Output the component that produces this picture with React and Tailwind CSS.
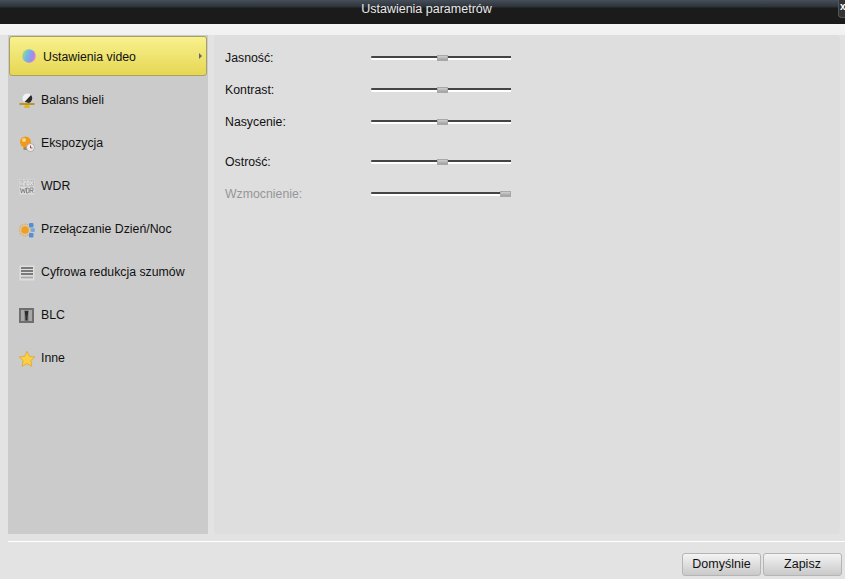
function IconBall() {
  return (
    <svg width="14" height="14" viewBox="0 0 14 14">
      <defs>
        <linearGradient id="ball" x1="0" y1="0.3" x2="1" y2="0.7">
          <stop offset="0" stopColor="#a8d880" />
          <stop offset="0.4" stopColor="#6fb6e8" />
          <stop offset="0.75" stopColor="#a78ae8" />
          <stop offset="1" stopColor="#e58ad8" />
        </linearGradient>
      </defs>
      <circle cx="7" cy="7" r="6.8" fill="url(#ball)" />
    </svg>
  )
}

function IconBalance() {
  return (
    <svg width="16" height="16" viewBox="0 0 16 16">
      <circle cx="8.5" cy="5.5" r="5" fill="#f2f2f2" />
      <path d="M12 2 A5 5 0 0 1 10 10 L5.5 9 Z" fill="#2a2a2a" />
      <rect x="0.5" y="10" width="15" height="2" fill="#b8962a" />
      <path d="M6 12 H10 L11 15 H5 Z" fill="#e3b320" />
    </svg>
  )
}

function IconExposure() {
  return (
    <svg width="16" height="16" viewBox="0 0 16 16">
      <circle cx="6.5" cy="6" r="5.5" fill="#f09a1a" />
      <circle cx="5" cy="4" r="2" fill="#fbd48a" />
      <rect x="4.5" y="11" width="4" height="3" fill="#a58a60" />
      <circle cx="11.5" cy="11.5" r="4" fill="#eeeeee" stroke="#9a9a9a" strokeWidth="0.7" />
      <path d="M11.5 9.5 V12 H13.5" fill="none" stroke="#c03a2a" strokeWidth="1" />
    </svg>
  )
}

function IconWdr() {
  return (
    <svg width="16" height="16" viewBox="0 0 16 16">
      <rect x="0.5" y="0.5" width="15" height="15" fill="#dcdcdc" />
      <rect x="1" y="1" width="14" height="6.5" fill="#bdbdbd" />
      <path d="M2 2 V6 M4 2 H6 V4 H4 V6 H6 M8 2 H10 V6 H8 Z M11 2 L14 6 M14 2 L11 6" fill="none" stroke="#f0f0f0" strokeWidth="0.8" />
      <path d="M1.5 9 L2.5 14 L4 10 L5.5 14 L6.5 9 M7.5 9 V14 H9 L10 12.5 V10.5 L9 9 Z M11 14 V9 H14 V11.5 H11 M12.5 11.5 L14.5 14" fill="none" stroke="#777777" strokeWidth="0.8" />
    </svg>
  )
}

function IconDayNight() {
  return (
    <svg width="16" height="16" viewBox="0 0 16 16">
      <circle cx="6" cy="8" r="5.8" fill="none" stroke="#f2a94a" strokeWidth="1.6" strokeDasharray="1.4 1.2" />
      <circle cx="6" cy="8" r="3.8" fill="#f0a020" />
      <rect x="10" y="1" width="4.5" height="4.5" rx="1" fill="#4f8fdc" />
      <rect x="12" y="6.2" width="3.8" height="3.8" rx="1" fill="#6fa6e6" />
      <rect x="10" y="11" width="4.5" height="4.5" rx="1" fill="#4f8fdc" />
    </svg>
  )
}

function IconNoise() {
  return (
    <svg width="16" height="16" viewBox="0 0 16 16">
      <rect x="0.5" y="0.5" width="15" height="15" fill="#dedede" />
      <path d="M2 3 H14 M2 6 H14 M2 9 H14" stroke="#7a7a7a" strokeWidth="1.8" />
      <path d="M2 12.5 H14" stroke="#a8a8a8" strokeWidth="1.8" />
    </svg>
  )
}

function IconBlc() {
  return (
    <svg width="16" height="16" viewBox="0 0 16 16">
      <rect x="0" y="0" width="15" height="15" fill="#6f6f6f" />
      <rect x="2" y="2" width="3" height="11" fill="#a8a8a8" />
      <rect x="10" y="2" width="3" height="11" fill="#a8a8a8" />
      <rect x="5" y="2" width="5" height="11" fill="#8f8f8f" />
      <path d="M5.7 3 H9.3 L8.6 9 V12.5 H6.4 V9 Z" fill="#2b2b2b" />
    </svg>
  )
}

function IconStar() {
  return (
    <svg width="16" height="16" viewBox="0 0 16 16">
      <path d="M8 0.3 L10.4 5.3 L15.8 6 L11.8 9.7 L12.9 15.4 L8 12.6 L3.1 15.4 L4.2 9.7 L0.2 6 L5.6 5.3 Z" fill="#fccf45" stroke="#dba21f" strokeWidth="0.7" />
    </svg>
  )
}

const menu = [
  ['Balans bieli', IconBalance],
  ['Ekspozycja', IconExposure],
  ['WDR', IconWdr],
  ['Przełączanie Dzień/Noc', IconDayNight],
  ['Cyfrowa redukcja szumów', IconNoise],
  ['BLC', IconBlc],
  ['Inne', IconStar],
]

function Slider({ label, pos, disabled, className = '' }) {
  return (
    <div className={`flex items-center h-[32px] ${className}`}>
      <span className={`w-[146px] ${disabled ? 'text-[#969696]' : 'text-[#111]'}`}>{label}</span>
      <div className="relative w-[140px] h-[4px]">
        <div className="h-[2px] bg-[#444] rounded-l-sm" />
        <div className="h-[2px] bg-white rounded-l-sm" />
        <div
          className="absolute top-[-1px] w-[11px] h-[6px] border border-[#a8a8a8] bg-gradient-to-b from-[#cfcfcf] to-[#a0a0a0]"
          style={{ left: pos }}
        />
      </div>
    </div>
  )
}

export default function App() {
  return (
    <div className="w-[845px] h-[579px] overflow-hidden flex flex-col bg-[#e3e3e3] text-[12.3px] font-['Liberation_Sans',Arial,sans-serif]">
      {/* title bar */}
      <div className="relative h-[24px] shrink-0 bg-[linear-gradient(#454f5a_0,#2c3238_7px,#1b1b1b_8px)] flex items-center justify-center pb-[5px] pl-[8px] text-[12.5px] text-[#e8e8e8]">
        Ustawienia parametrów
        <div className="absolute right-0 top-0 w-[7px] h-[18px] pl-[1px] bg-[#333] rounded-bl-sm border-l border-b border-[#555] text-[10px] font-bold leading-[14px] text-white overflow-hidden">x</div>
      </div>

      <div className="h-[11px] shrink-0 bg-gradient-to-b from-[#f7f6f6] to-[#f1f0f0]" />

      <div className="flex flex-1 min-h-0 pl-[8px] pr-[5px] gap-[6px]">
        {/* left menu */}
        <div className="w-[200px] bg-[#cbcbcb] pt-[1px] px-[1px]">
          <div className="h-[40px] flex items-center pl-[12px] pr-[4px] rounded-[3px] border border-[#a9a068] bg-gradient-to-b from-[#f8f28e] to-[#e6d650] text-[#111]">
            <IconBall />
            <span className="ml-[7px] pt-[2px] flex-1">Ustawienia video</span>
            <span className="w-0 h-0 border-y-[3px] border-y-transparent border-l-[3px] border-l-[#666]" />
          </div>
          <div className="pt-[3px]">
            {menu.map(([label, Icon]) => (
              <div key={label} className="h-[43px] flex items-center pl-[10px] text-[#111]">
                <Icon />
                <span className="ml-[6px]">{label}</span>
              </div>
            ))}
          </div>
        </div>

        {/* sliders panel */}
        <div className="flex-1 bg-[#dedede] rounded-[4px] pt-[7px] pl-[11px]">
          <Slider label="Jasność:" pos={66} />
          <Slider label="Kontrast:" pos={66} />
          <Slider label="Nasycenie:" pos={66} />
          <Slider label="Ostrość:" pos={66} className="mt-[8px]" />
          <Slider label="Wzmocnienie:" pos={129} disabled />
        </div>
      </div>

      {/* bottom bar */}
      <div className="h-[45px] shrink-0 pl-[8px]">
        <div className="mt-[7px] h-[1px] bg-white" />
        <div className="flex justify-end gap-[2px] pt-[11px] pr-[3px] text-[12.5px]">
          {['Domyślnie', 'Zapisz'].map(label => (
            <button key={label} className="w-[79px] h-[23px] rounded-[3px] border border-[#b5b5b5] bg-gradient-to-b from-[#f4f4f4] to-[#c9c9c9] text-[#111]">
              {label}
            </button>
          ))}
        </div>
      </div>
    </div>
  )
}
